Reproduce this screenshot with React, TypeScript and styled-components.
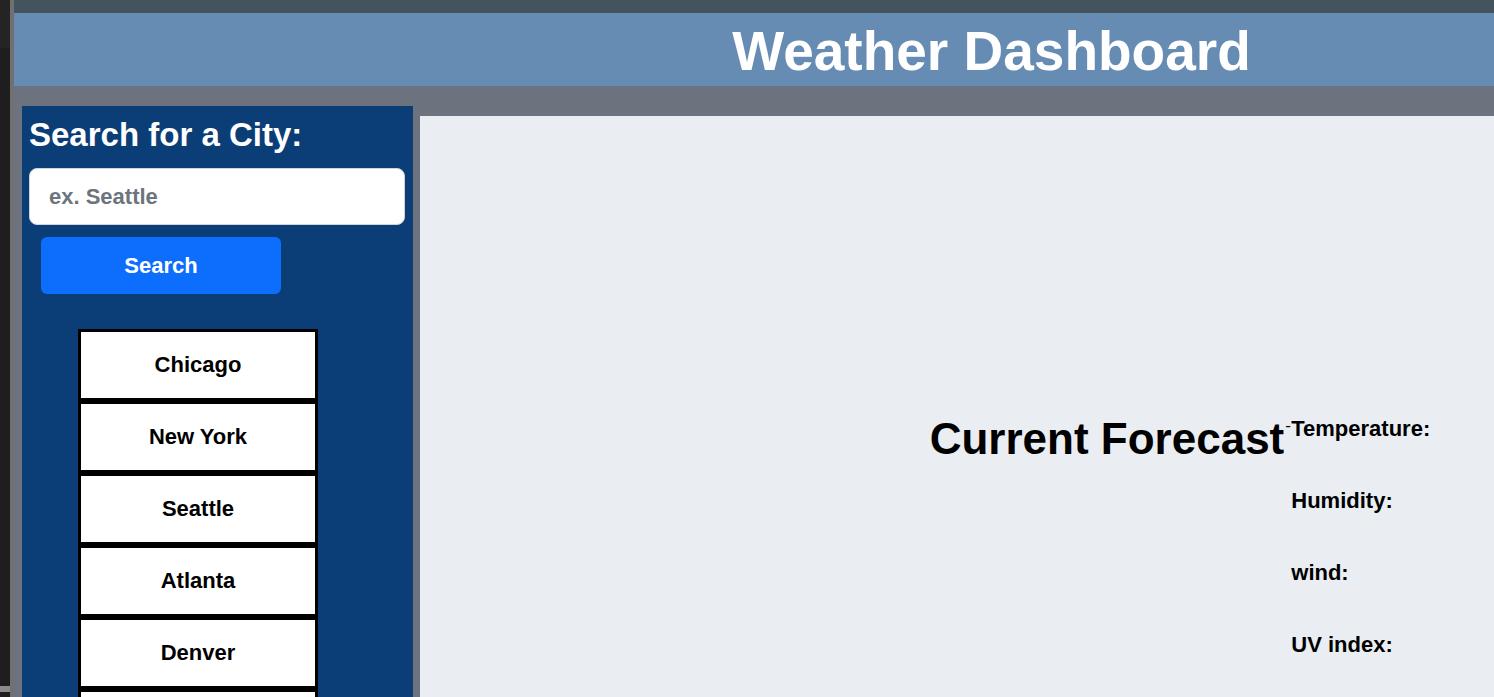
import React from "react";
import styled, { createGlobalStyle } from "styled-components";

const GlobalStyle = createGlobalStyle`
  html, body {
    margin: 0;
    padding: 0;
    height: 100%;
    overflow: hidden;
    background: #6c737e;
    font-family: "Liberation Sans", Arial, sans-serif;
  }
  #root { height: 100%; }
  * { box-sizing: border-box; }
`;

const Shell = styled.div`
  display: flex;
  height: 100vh;
  overflow: hidden;
`;

const Chrome = styled.div`
  width: 10px;
  flex-shrink: 0;
  display: flex;
  flex-direction: column;
  background: #1e1e1e;
`;

const ChromeTop = styled.div`
  height: 48px;
  flex-shrink: 0;
  background: #242424;
`;

const ChromeFill = styled.div`
  flex: 1;
`;

const ChromeScroll = styled.div`
  height: 6px;
  flex-shrink: 0;
  margin-bottom: 5px;
  background: #8a8a8a;
`;

const Divider = styled.div`
  width: 4px;
  flex-shrink: 0;
  background: #707070;
`;

const Page = styled.div`
  width: 1955px;
  flex-shrink: 0;
  display: flex;
  flex-direction: column;
  background: #6c737e;
`;

const TopStrip = styled.div`
  height: 13px;
  flex-shrink: 0;
  background: #44545f;
`;

const Header = styled.header`
  height: 73px;
  flex-shrink: 0;
  padding-top: 11px;
  background: #668cb4;
  text-align: center;
`;

const Title = styled.h1`
  margin: 0;
  font-size: 55px;
  line-height: 55px;
  font-weight: 700;
  color: #ffffff;
`;

const Body = styled.div`
  flex-shrink: 0;
  display: flex;
  align-items: flex-start;
  gap: 7px;
  padding-left: 8px;
`;

const Sidebar = styled.aside`
  width: 391px;
  flex-shrink: 0;
  margin-top: 20px;
  min-height: 700px;
  padding: 9px 8px 0 7px;
  background: #0b3d77;
  display: flex;
  flex-direction: column;
  align-items: flex-start;
`;

const SideHeading = styled.h2`
  margin: 0;
  font-size: 33px;
  line-height: 40px;
  font-weight: 700;
  color: #ffffff;
`;

const SearchInput = styled.input`
  margin-top: 13px;
  width: 376px;
  height: 57px;
  padding: 0 0 0 19px;
  border: 1px solid #ced4da;
  border-radius: 8px;
  background: #ffffff;
  font-family: "Liberation Sans", Arial, sans-serif;
  font-size: 22px;
  font-weight: 700;
  color: #212529;
  outline: none;
  &::placeholder {
    color: #6c757d;
  }
`;

const SearchButton = styled.button`
  margin: 12px 0 0 12px;
  width: 240px;
  height: 57px;
  border: none;
  border-radius: 6px;
  background: #0d6efd;
  color: #ffffff;
  font-family: "Liberation Sans", Arial, sans-serif;
  font-size: 22px;
  font-weight: 700;
  cursor: pointer;
`;

const CityList = styled.div`
  margin: 35px 0 0 49px;
  width: 240px;
  display: flex;
  flex-direction: column;
`;

const CityButton = styled.button`
  height: 72px;
  width: 100%;
  flex-shrink: 0;
  border: 3px solid #000000;
  background: #ffffff;
  color: #000000;
  font-family: "Liberation Sans", Arial, sans-serif;
  font-size: 22px;
  font-weight: 700;
  display: flex;
  align-items: center;
  justify-content: center;
  padding: 0;
  cursor: pointer;
`;

const Main = styled.main`
  flex: 1;
  margin-top: 30px;
  min-height: 700px;
  padding-top: 296px;
  background: #eaedf2;
  display: flex;
  justify-content: center;
  align-items: flex-start;
  gap: 2px;
`;

const ForecastTitle = styled.h2`
  margin: 0;
  font-size: 44px;
  line-height: 53px;
  font-weight: 700;
  color: #000000;
  white-space: nowrap;
`;

const Stats = styled.div`
  width: 173px;
  margin-top: 4px;
  display: flex;
  flex-direction: column;
  gap: 46px;
`;

const Stat = styled.div<{ $lead?: boolean }>`
  position: relative;
  padding-left: 5px;
  font-size: 22px;
  line-height: 26px;
  font-weight: 700;
  color: #000000;
  white-space: nowrap;
  &::before {
    content: ${(p) => (p.$lead ? '"-"' : "none")};
    position: absolute;
    left: -1px;
    top: -3px;
    font-size: 17px;
    font-weight: 400;
    line-height: 26px;
  }
`;

const cities = ["Chicago", "New York", "Seattle", "Atlanta", "Denver", ""];
const stats = ["Temperature:", "Humidity:", "wind:", "UV index:"];

export default function App() {
  return (
    <>
      <GlobalStyle />
      <Shell>
        <Chrome>
          <ChromeTop />
          <ChromeFill />
          <ChromeScroll />
        </Chrome>
        <Divider />
        <Page>
          <TopStrip />
          <Header>
            <Title>Weather Dashboard</Title>
          </Header>
          <Body>
            <Sidebar>
              <SideHeading>Search for a City:</SideHeading>
              <SearchInput type="text" placeholder="ex. Seattle" />
              <SearchButton type="button">Search</SearchButton>
              <CityList>
                {cities.map((c, i) => (
                  <CityButton key={i} type="button">
                    {c}
                  </CityButton>
                ))}
              </CityList>
            </Sidebar>
            <Main>
              <ForecastTitle>Current Forecast</ForecastTitle>
              <Stats>
                {stats.map((s, i) => (
                  <Stat key={s} $lead={i === 0}>
                    {s}
                  </Stat>
                ))}
              </Stats>
            </Main>
          </Body>
        </Page>
      </Shell>
    </>
  );
}
